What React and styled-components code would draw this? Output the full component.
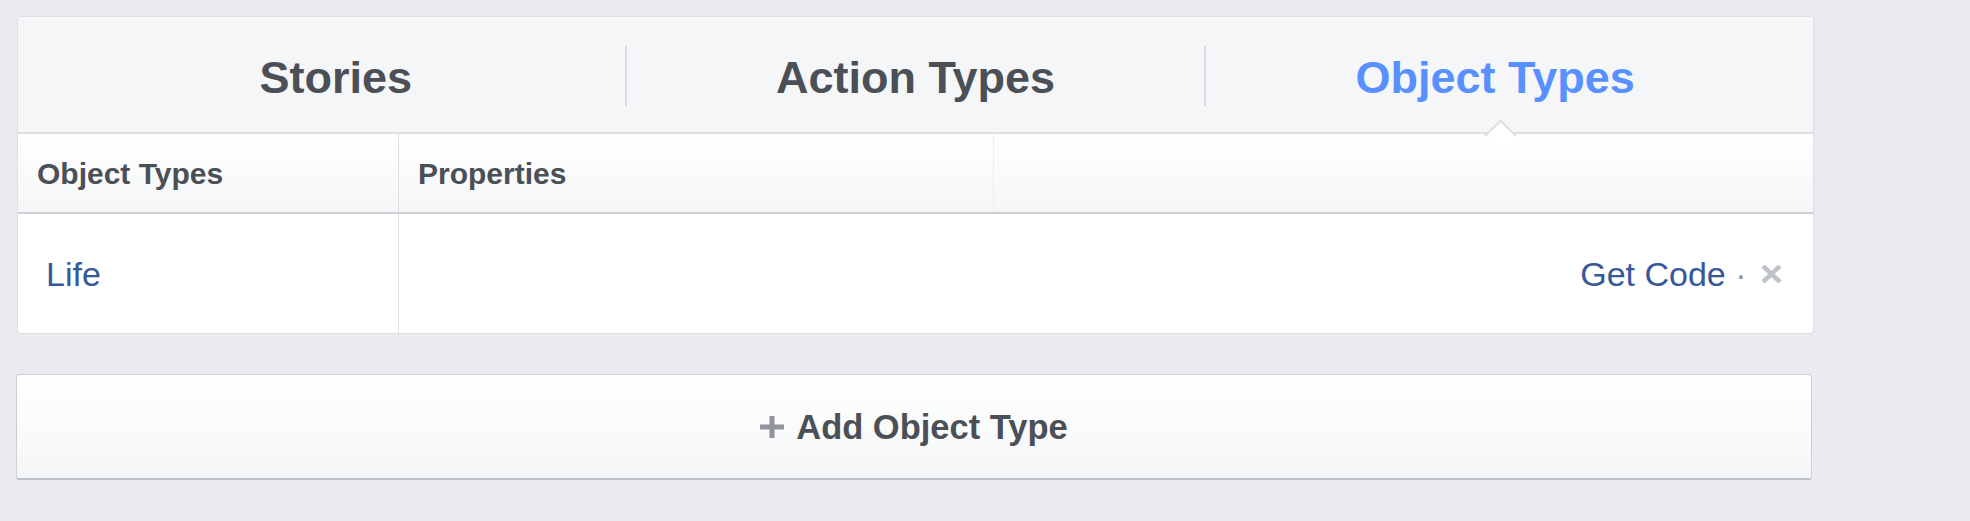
import React from "react";
import styled, { createGlobalStyle } from "styled-components";

const Global = createGlobalStyle`
  html, body { margin: 0; padding: 0; background: #e9ebee; }
  body { font-family: "Liberation Sans", Arial, Helvetica, sans-serif; }
`;

const Page = styled.div`
  padding: 16px 0 40px 17px;
  display: flex;
  flex-direction: column;
  gap: 40px;
  width: 1797px;
`;

const Panel = styled.section`
  background: #fff;
  border: 1px solid #dddfe2;
  border-radius: 4px;
  display: flex;
  flex-direction: column;
`;

const TabBar = styled.div`
  display: flex;
  align-items: center;
  height: 115px;
  padding: 0 29px;
  background: #f5f6f7;
  border-bottom: 2px solid #dddfe2;
  border-radius: 3px 3px 0 0;
`;

const Tab = styled.div`
  position: relative;
  flex: 1;
  align-self: stretch;
  display: flex;
  align-items: center;
  justify-content: center;
`;

const TabLabel = styled.span`
  margin-top: 5px;
  font-size: 45px;
  line-height: 1;
  font-weight: 700;
  color: ${(p) => (p.$active ? "#5890ff" : "#4b4f56")};
`;

const Caret = styled.span`
  position: absolute;
  left: calc(50% + 6px - 12.5px);
  bottom: -14.5px;
  width: 21px;
  height: 21px;
  background: #fff;
  border-top: 2px solid #dddfe2;
  border-left: 2px solid #dddfe2;
  transform: rotate(45deg);
  z-index: 2;
`;

const TabDivider = styled.span`
  width: 2px;
  height: 60px;
  margin-top: 3px;
  background: #d8dadf;
`;

const HeaderRow = styled.div`
  display: flex;
  height: 78px;
  background: linear-gradient(#ffffff, #f5f6f7);
  border-bottom: 2px solid #ccd0d5;
`;

const HeaderCell = styled.div`
  width: ${(p) => p.$w || "auto"};
  flex: ${(p) => (p.$w ? "none" : "1")};
  display: flex;
  align-items: center;
  padding: 0 19px;
  box-sizing: border-box;
  border-left: ${(p) => (p.$divider ? `1px solid ${p.$divider}` : "none")};
  font-size: 30px;
  line-height: 1;
  font-weight: 700;
  color: #4b4f56;
  & > span { margin-top: 1px; }
`;

const BodyRow = styled.div`
  display: flex;
  height: 119px;
`;

const BodyCell = styled.div`
  width: ${(p) => p.$w || "auto"};
  flex: ${(p) => (p.$w ? "none" : "1")};
  display: flex;
  align-items: center;
  justify-content: ${(p) => (p.$right ? "flex-end" : "flex-start")};
  padding: ${(p) => (p.$right ? "0 31px 0 0" : "0 0 0 28px")};
  box-sizing: border-box;
  border-left: ${(p) => (p.$divider ? "1px solid #dddfe2" : "none")};
  font-size: 34px;
  line-height: 1;
  color: #365899;
`;

const Link = styled.span`
  color: #365899;
  white-space: pre;
`;

const Dot = styled.span`
  color: #90949c;
  white-space: pre;
`;

const CloseIcon = styled.svg`
  margin-left: 5px;
  margin-top: 1px;
  display: block;
`;

const AddButton = styled.button`
  width: 1796px;
  height: 106px;
  margin-left: -1px;
  display: flex;
  align-items: center;
  justify-content: center;
  gap: 12px;
  background: linear-gradient(#ffffff, #f5f6f7);
  border: 1px solid #ccd0d5;
  border-bottom-color: #bec3c9;
  border-bottom-width: 2px;
  border-radius: 3px;
  font-family: "Liberation Sans", Arial, Helvetica, sans-serif;
  font-size: 34.5px;
  line-height: 1;
  font-weight: 700;
  color: #4b4f56;
  cursor: pointer;
  padding: 0;
`;

const ButtonText = styled.span`
  margin-top: 1px;
`;

export default function App() {
  const tabs = ["Stories", "Action Types", "Object Types"];
  return (
    <>
      <Global />
      <Page>
        <Panel>
          <TabBar>
            {tabs.map((t, i) => (
              <React.Fragment key={t}>
                {i > 0 && <TabDivider />}
                <Tab>
                  <TabLabel $active={i === 2}>{t}</TabLabel>
                  {i === 2 && <Caret />}
                </Tab>
              </React.Fragment>
            ))}
          </TabBar>
          <HeaderRow>
            <HeaderCell $w="380px"><span>Object Types</span></HeaderCell>
            <HeaderCell $w="595px" $divider="#dddfe2"><span>Properties</span></HeaderCell>
            <HeaderCell $divider="#eceef1" />
          </HeaderRow>
          <BodyRow>
            <BodyCell $w="380px"><Link>Life</Link></BodyCell>
            <BodyCell $divider $right>
              <Link>Get Code </Link>
              <Dot>· </Dot>
              <CloseIcon width="21" height="18" viewBox="0 0 21 18">
                <path d="M2 1 L19 17 M19 1 L2 17" stroke="#bec3c9" strokeWidth="4.5" fill="none" />
              </CloseIcon>
            </BodyCell>
          </BodyRow>
        </Panel>
        <AddButton>
          <svg width="24" height="22" viewBox="0 0 24 22">
            <rect x="0" y="8.5" width="24" height="5" fill="#90949c" />
            <rect x="9.5" y="0" width="5" height="22" fill="#90949c" />
          </svg>
          <ButtonText>Add Object Type</ButtonText>
        </AddButton>
      </Page>
    </>
  );
}
